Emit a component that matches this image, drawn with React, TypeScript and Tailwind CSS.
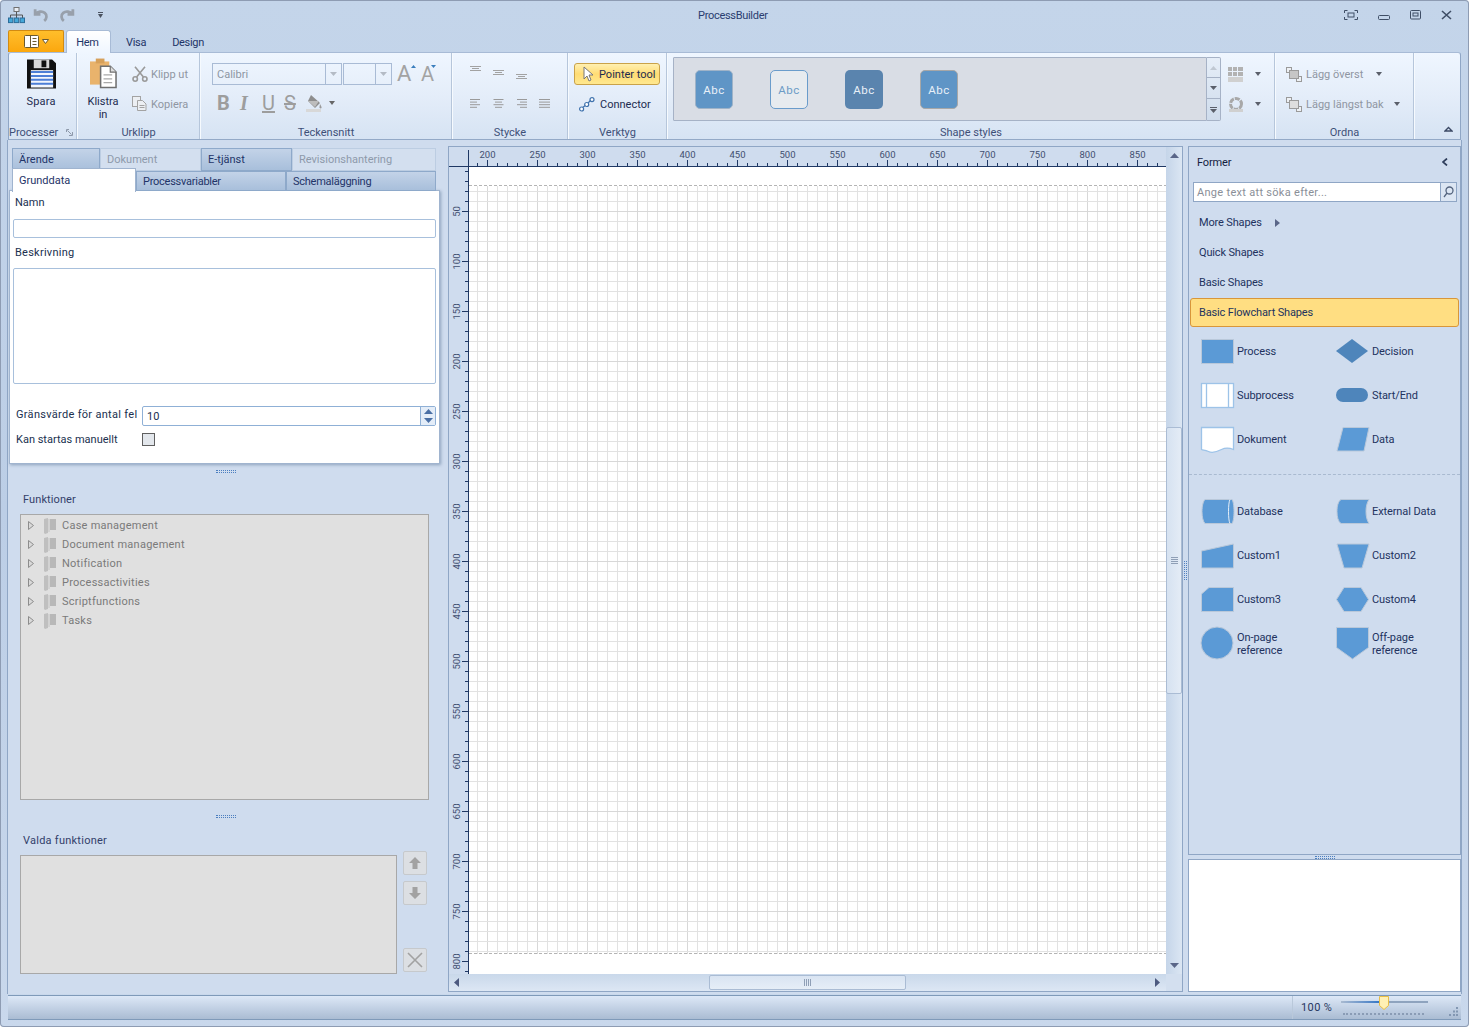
import React from "react";

const Caret = ({ c = "#5a5f6a", w = 6 }: { c?: string; w?: number }) => (
  <svg width={w} height={4} viewBox="0 0 7 4" preserveAspectRatio="none" className="shrink-0"><path d="M0 0h7L3.5 4z" fill={c} /></svg>
);

const Sep = () => (
  <div className="w-[2px] h-[86px] shrink-0 flex"><div className="w-px bg-[#b6c6db]" /><div className="w-px bg-[#f6fafe]" /></div>
);

const Group = ({ w, label, children, className = "" }: { w: string; label: React.ReactNode; children?: React.ReactNode; className?: string }) => (
  <div className={`${w} shrink-0 h-[86px] flex flex-col`}>
    <div className={`h-[71px] ${className}`}>{children}</div>
    <div className="h-[15px] leading-[17px] text-center text-[11px] text-[#3e5078]">{label}</div>
  </div>
);

const SaveIcon = () => (
  <svg width="29" height="32" viewBox="0 0 30 32" className="shrink-0">
    <path d="M0 1h26l4 4v26H0z" fill="#111" />
    <rect x="7" y="1" width="16" height="9" fill="#d8d8d8" />
    <rect x="15" y="2" width="5" height="7" fill="#111" />
    <rect x="4" y="12" width="23" height="18" fill="#f4f7fd" />
    <path d="M4 14h23M4 18h23M4 22h23M4 26h23" stroke="#4d7fd6" strokeWidth="2" />
  </svg>
);

const PasteIcon = () => (
  <svg width="27" height="31" viewBox="0 0 28 31" className="shrink-0">
    <rect x="0" y="3" width="20" height="24" fill="#e9b36c" />
    <rect x="6" y="0" width="9" height="5" fill="#d6a05a" />
    <path d="M11 8h10l6 6v16H11z" fill="#fff" stroke="#6f6f6f" strokeWidth="1.6" />
    <path d="M21 8v6h6" fill="#ddd" stroke="#6f6f6f" strokeWidth="1.2" />
    <path d="M14 17h9M14 21h9M14 25h9" stroke="#a9a9a9" strokeWidth="1.4" />
  </svg>
);

const Scissors = () => (
  <svg width="16" height="16" viewBox="0 0 16 16" fill="none" stroke="#9a9a9a" strokeWidth="1.6" className="shrink-0">
    <circle cx="3.2" cy="13" r="2.2" /><circle cx="12.8" cy="13" r="2.2" />
    <path d="M4.6 11 13 0.8M11.4 11 3 0.8" />
  </svg>
);

const CopyIcon = () => (
  <svg width="15" height="15" viewBox="0 0 15 15" fill="#eceff3" stroke="#a3a3a3" className="shrink-0">
    <rect x="0.5" y="0.5" width="8" height="10" />
    <path d="M5.5 4.5h5l3.5 3.5v6.5H5.5z" />
    <path d="M7.5 9.5h5M7.5 11.5h5" />
  </svg>
);

const AlignIcon = ({ kind }: { kind: "l" | "c" | "r" | "j" }) => {
  const rows = [10, 7, 10, 7];
  return (
    <svg width="11" height="9" viewBox="0 0 11 9" stroke="#9a9a9a">
      {rows.map((len, i) => {
        const l = kind === "j" ? 11 : len;
        const x = kind === "r" ? 11 - l : kind === "c" ? (11 - l) / 2 : 0;
        return <path key={i} d={`M${x} ${i * 2.6 + 0.5}h${l}`} />;
      })}
    </svg>
  );
};

const TopAlign = () => (
  <svg width="11" height="5" viewBox="0 0 11 5" stroke="#a2a2a2"><path d="M0 .5h11M2 2.5h7M0 4.5h11" /></svg>
);

const OrderIcon = ({ front }: { front?: boolean }) => (
  <svg width="16" height="15" viewBox="0 0 16 15" stroke="#9a9a9a" fill="#eef1f5" className="shrink-0">
    <rect x="0.5" y="0.5" width="5" height="5" />
    <rect x="10.5" y="9.5" width="5" height="5" />
    <rect x="3.5" y="3.5" width="9" height="8" fill={front ? "#c6c6c6" : "#dedede"} />
  </svg>
);

const Abc = ({ className }: { className: string }) => (
  <div className={`w-[38px] h-[39px] pt-[3px] rounded-[5px] flex items-center justify-center text-[11.5px] tracking-[0.5px] ${className}`}>Abc</div>
);

const Ribbon = () => (
  <div className="mx-[8px] h-[88px] rounded-t-[3px] border border-b-[#93a9c7] border-x-[#8fa6c5] border-t-[#a8bbd6] bg-gradient-to-b from-[#eff6ff] via-[#e4edf9] to-[#d6e3f3] flex shrink-0">
    <Group
      w="w-[67px]"
      label={
        <div className="flex justify-between items-center pr-[3px] text-[#3e5078]">
          Processer
          <svg width="7" height="7" viewBox="0 0 7 7" fill="none" stroke="#8e99aa"><path d="M.5 3V.5H3M1.5 1.5l4 4M6.5 3v3.5H3" /></svg>
        </div>
      }
      className="pr-[3px]"
    >
      <div className="flex flex-col items-center pt-[5px]">
        <SaveIcon />
        <div className="text-[11px] leading-[16px] tracking-[0.2px] text-[#1d2c50] mt-[4px]">Spara</div>
      </div>
    </Group>
    <Sep />
    <Group w="w-[121px]" label="Urklipp" className="flex">
      <div className="w-[50px] flex flex-col items-center pt-[5px]">
        <PasteIcon />
        <div className="text-[11px] leading-[13px] text-[#1d2c50] text-center mt-[6px]">Klistra<br />in</div>
      </div>
      <div className="flex flex-col text-[11px] text-[#8f96a2] pt-[13px] pl-[4px]">
        <div className="h-[30px] flex items-start gap-[3px]"><Scissors /><span className="leading-[18px] whitespace-nowrap">Klipp ut</span></div>
        <div className="h-[20px] flex items-start gap-[4px]"><CopyIcon /><span className="leading-[18px]">Kopiera</span></div>
      </div>
    </Group>
    <Sep />
    <Group w="w-[250px]" label="Teckensnitt" className="pl-[11px] pt-[10px]">
      <div className="flex items-center">
        <div className="w-[130px] h-[22px] border border-[#a9bbd5] flex">
          <div className="flex-1 pl-[4px] text-[11px] leading-[22px] text-[#8d96a3]">Calibri</div>
          <div className="w-[16px] border-l border-[#a9bbd5] flex items-center justify-center"><Caret c="#b4bbc5" w={7} /></div>
        </div>
        <div className="ml-[1px] w-[49px] h-[22px] border border-[#a9bbd5] flex">
          <div className="flex-1" />
          <div className="w-[16px] border-l border-[#a9bbd5] flex items-center justify-center"><Caret c="#b4bbc5" w={7} /></div>
        </div>
        <div className="relative ml-[5px] w-[19px] text-[22px] leading-[22px] text-[#a3a3a3]">A<svg className="absolute top-[2px] left-[14px]" width="5" height="3" viewBox="0 0 5 3"><path d="M0 3h5L2.500 0z" fill="#3a7ebd" /></svg></div>
        <div className="relative ml-[5px] w-[19px] text-[20px] leading-[22px] text-[#a3a3a3]">A<svg className="absolute top-[2px] left-[10px]" width="5" height="3" viewBox="0 0 5 3"><path d="M0 0h5L2.500 3z" fill="#3a7ebd" /></svg></div>
      </div>
      <div className="flex items-center mt-[7px] pl-[5px] h-[22px] text-[20px] leading-[22px] text-[#9d9d9d]">
        <span className="w-[23px] font-bold">B</span>
        <span className="w-[22px] italic font-['Liberation_Serif',serif] font-bold">I</span>
        <span className="w-[22px] underline">U</span>
        <span className="w-[22px] line-through">S</span>
        <svg width="17" height="18" viewBox="0 0 17 18" className="shrink-0"><path d="M5 1l9 8-5 5-7-7z" fill="#8d8d8d" /><path d="M2 7h11l-4 6z" fill="#bdbdbd" /><path d="M14 10c1 2 2 3 1.500 4s-2.500 0-2-1z" fill="#9a9a9a" /><rect y="15" width="15" height="3" fill="#d8d8d8" /></svg>
        <span className="ml-[6px]"><Caret c="#666" w={6} /></span>
      </div>
    </Group>
    <Sep />
    <Group w="w-[114px]" label="Stycke" className="pl-[17px]">
      <div className="grid grid-cols-[23px_23px_23px] pt-[13px] h-[40px] items-start">
        <TopAlign />
        <div className="mt-[4px]"><TopAlign /></div>
        <div className="mt-[8px]"><TopAlign /></div>
      </div>
      <div className="grid grid-cols-[23px_23px_23px_23px] pt-[6px]">
        <AlignIcon kind="l" /><AlignIcon kind="c" /><AlignIcon kind="r" /><AlignIcon kind="j" />
      </div>
    </Group>
    <Sep />
    <Group w="w-[97px]" label="Verktyg" className="pl-[5px] pt-[10px]">
      <div className="w-[86px] h-[22px] rounded-[3px] border border-[#c9a24a] bg-gradient-to-b from-[#fff0b0] via-[#ffdc74] to-[#ffe88f] flex items-center text-[11px] text-[#1d2c50]">
        <svg className="ml-[8px] mr-[5px] shrink-0" width="11" height="16" viewBox="0 0 11 16"><path d="M1 1v12l3-3 2 5 2-1-2-5h4z" fill="#fff" stroke="#777" /></svg>
        <span className="whitespace-nowrap pt-[2px]">Pointer tool</span>
      </div>
      <div className="flex items-center mt-[8px] h-[22px] text-[11px] text-[#1d2c50]">
        <svg className="ml-[5px] mr-[5px] shrink-0" width="16" height="15" viewBox="0 0 16 15" fill="#fff" stroke="#3f72ad" strokeWidth="1.2"><path d="M3 11l4-3M9 6l3-3" /><circle cx="2.600" cy="12" r="2" /><circle cx="7.700" cy="7.500" r="2" /><circle cx="13" cy="2.600" r="2" /></svg>
        <span className="pt-[2px]">Connector</span>
      </div>
    </Group>
    <Sep />
    <Group w="w-[606px]" label="Shape styles" className="flex pl-[5px] pt-[4px]">
      <div className="w-[534px] h-[64px] border border-[#a6b2c6] bg-[#d9dde5] rounded-l-[1px] flex items-center pl-[21px] gap-[37px]">
        <Abc className="bg-[#5f95c6] border border-[#9fb3c8] text-[#e8f0f8]" />
        <Abc className="bg-[#e7ebef] border border-[#6a9ccb] text-[#6c9bc6]" />
        <Abc className="bg-[#5a84ae] text-[#e8f0f8]" />
        <Abc className="bg-[#5f95c6] border border-[#a7a7a7] text-[#e8f0f8]" />
      </div>
      <div className="w-[14px] h-[64px] border border-l-0 border-[#a6b2c6] rounded-r-[2px] flex flex-col bg-gradient-to-b from-[#e6eef8] to-[#cfdcec]">
        <div className="h-[20px] border-b border-[#a6b2c6] flex items-center justify-center"><svg width="7" height="4" viewBox="0 0 7 4"><path d="M0 4h7L3.500 0z" fill="#c0c8d2" /></svg></div>
        <div className="h-[21px] border-b border-[#a6b2c6] flex items-center justify-center"><Caret c="#5a5f6a" w={7} /></div>
        <div className="flex-1 flex flex-col items-center justify-center gap-[1px]"><div className="w-[7px] h-px bg-[#5a5f6a]" /><Caret c="#5a5f6a" w={7} /></div>
      </div>
      <div className="pl-[7px] pt-[9px]">
        <div className="flex items-center h-[16px]">
          <svg width="15" height="15" viewBox="0 0 15 15" fill="#b2b2b2" className="shrink-0"><path d="M0 0h4v4H0zM5 0h4v4H5zM10 0h5v4h-5zM0 5h4v4H0zM5 5h4v4H5zM10 5h5v4h-5z" /><path d="M0 10h15v5H0z" fill="#d0d0d0" /></svg>
          <span className="ml-[12px]"><Caret /></span>
        </div>
        <div className="flex items-center h-[16px] mt-[14px]">
          <svg width="16" height="15" viewBox="0 0 16 15" fill="none" className="shrink-0"><circle cx="8" cy="7" r="5.500" stroke="#a8a8a8" strokeWidth="3" strokeDasharray="5 1" /><path d="M1 12h14v3H1z" fill="#d0d0d0" /></svg>
          <span className="ml-[11px]"><Caret /></span>
        </div>
      </div>
    </Group>
    <Sep />
    <Group w="w-[137px]" label="Ordna" className="pl-[10px] pt-[13px] text-[11px] text-[#8f96a2]">
      <div className="flex items-center h-[16px]">
        <OrderIcon front /><span className="ml-[4px] w-[70px] pt-[2px] whitespace-nowrap">Lägg överst</span><Caret />
      </div>
      <div className="flex items-center h-[16px] mt-[14px]">
        <OrderIcon /><span className="ml-[4px] w-[88px] pt-[2px] whitespace-nowrap">Lägg längst bak</span><Caret />
      </div>
    </Group>
    <Sep />
    <div className="flex-1 flex items-end justify-end pb-[7px] pr-[7px]">
      <svg width="9" height="6" viewBox="0 0 9 6" fill="none" stroke="#3c4a66" strokeWidth="1.400"><path d="M1 5l3.500-3.500L8 5z" /></svg>
    </div>
  </div>
);

const TitleBar = () => (
  <div className="h-[30px] flex items-center relative shrink-0">
    <div className="flex items-center pl-[8px]">
      <svg width="17" height="17" viewBox="0 0 17 17" className="shrink-0"><rect x="6" y="0.500" width="5" height="4" fill="#e9edf3" stroke="#707070" /><path d="M8.500 5v3M2.500 11V8h12v3M8.500 8v3" fill="none" stroke="#555" /><g fill="#45a7d8" stroke="#2c6d9a"><rect x="0.500" y="11" width="4.400" height="4.600" /><rect x="6.300" y="11" width="4.400" height="4.600" /><rect x="12.100" y="11" width="4.400" height="4.600" /></g></svg>
      <svg className="ml-[8px] shrink-0" width="16" height="16" viewBox="0 0 15 15" fill="none" stroke="#98a0ab" strokeWidth="2.600"><path d="M2 2v5h5M2.500 7c2-3 6-3.500 8.500-1.500s2 5.500-.5 7.500" /></svg>
      <svg className="ml-[10px] shrink-0" width="16" height="16" viewBox="0 0 15 15" fill="none" stroke="#98a0ab" strokeWidth="2.600"><path d="M13 2v5H8M12.500 7c-2-3-6-3.500-8.500-1.500s-2 5.500.5 7.500" /></svg>
      <div className="ml-[23px] flex flex-col items-center gap-[1px]"><div className="w-[5px] h-px bg-[#4a5260]" /><Caret c="#4a5260" w={5} /></div>
    </div>
    <div className="absolute left-[698px] top-[9px] text-[11px] leading-[14px] tracking-[-0.3px] text-[#2a3d70]">ProcessBuilder</div>
    <div className="ml-auto pr-[17px] flex items-center text-[#46566e]">
      <svg width="14" height="10" viewBox="0 0 14 10" fill="none" stroke="#3f4e66" className="shrink-0"><path d="M3.500.5H.5V3M10.500.5h3V3M.5 7v2.500h3M13.500 7v2.500h-3" /><rect x="4" y="3" width="6" height="4" /></svg>
      <svg className="ml-[20px] mt-[4px] shrink-0" width="12" height="5" viewBox="0 0 12 5" fill="none" stroke="#3f4e66"><rect x="0.500" y="0.500" width="11" height="4" rx="1" /></svg>
      <svg className="ml-[20px] shrink-0" width="11" height="10" viewBox="0 0 11 10" fill="none" stroke="#3f4e66"><rect x="0.500" y="0.500" width="10" height="8.500" rx="1" /><rect x="3" y="3" width="5" height="3" /></svg>
      <svg className="ml-[20px] shrink-0" width="11" height="10" viewBox="0 0 11 10" fill="none" stroke="#3f4e66" strokeWidth="1.600"><path d="M1 1l9 8M10 1L1 9" /></svg>
    </div>
  </div>
);

const TabRow = () => (
  <div className="h-[22px] flex items-end pl-[8px] text-[11px] tracking-[-0.3px] text-[#1f3468] shrink-0 relative z-10">
    <div className="w-[56px] h-[22px] rounded-t-[2px] border border-b-0 border-[#d18a12] bg-gradient-to-b from-[#ffbe2a] to-[#fba70c] flex items-center justify-center gap-[3px]">
      <svg width="15" height="13" viewBox="0 0 15 13" fill="#fff" stroke="#6a5a30"><rect x="0.500" y="0.500" width="14" height="12" rx="1" /><path d="M6.500.5v12M8.500 3.500h4M8.500 6.500h4M8.500 9.500h4" fill="none" /></svg>
      <svg width="7" height="5" viewBox="0 0 7 5" fill="#fff" stroke="#6a5a30"><path d="M.5.5h6L3.500 4.500z" /></svg>
    </div>
    <div className="ml-[2px] w-[45px] h-[23px] pt-[2px] pr-[2px] -mb-px rounded-t-[3px] border border-b-0 border-[#a8bbd6] bg-gradient-to-b from-[#ffffff] to-[#eff6ff] flex items-center justify-center">Hem</div>
    <div className="ml-[15px] h-[22px] leading-[26px] -ml-px">Visa</div>
    <div className="ml-[26px] h-[22px] leading-[26px]">Design</div>
  </div>
);

const SubTab = ({ w, label, on, low }: { w: string; label: string; on: boolean; low?: boolean }) => (
  <div className={`${w} shrink-0 h-full pl-[6px] border text-[11px] ${low ? "leading-[22px]" : "leading-[20px] tracking-[-0.25px]"} ${on ? "bg-gradient-to-b from-[#c3d3e8] to-[#a8bfdb] border-[#8ea9ca] text-[#1f3468]" : "bg-[#d3dfef] border-[#bccde2] text-[#8e9aab]"}`}>{label}</div>
);

const Splitter = ({ v }: { v?: boolean }) => (
  v ? <div className="w-[3px] h-[19px] border-x border-dotted border-[#4c7fc0]" />
    : <div className="w-[20px] h-[3px] border-y border-dotted border-[#4c7fc0]" />
);

const Folder = () => (
  <svg width="12" height="16" viewBox="0 0 12 16" className="shrink-0"><path d="M0 1l4-1v15l-3 1-1-1z" fill="#bfbfbf" /><path d="M4 1h8v11H4z" fill="#b8b8b8" /><path d="M4 1h2v13H4z" fill="#d2d2d2" /></svg>
);

const NavBtn = ({ children, className = "" }: { children: React.ReactNode; className?: string }) => (
  <div className={`w-[24px] h-[24px] rounded-[2px] border border-[#c6c9cc] bg-[#dcdfe3] flex items-center justify-center ${className}`}>{children}</div>
);

const LeftPanel = () => (
  <div className="w-[440px] shrink-0 pt-[8px] flex flex-col">
    <div className="pl-[4px] flex h-[23px] pr-[4px]">
      <SubTab w="w-[88px]" label="Ärende" on low />
      <SubTab w="w-[101px]" label="Dokument" on={false} low />
      <SubTab w="w-[91px]" label="E-tjänst" on low />
      <SubTab w="w-[144px]" label="Revisionshantering" on={false} low />
    </div>
    <div className="pl-[4px] flex h-[20px] relative z-10">
      <div className="w-[124px] h-[24px] -mt-[3px] bg-white border border-b-0 border-[#a0b4cf] pl-[6px] text-[11px] leading-[24px] text-[#1f3468]">Grunddata</div>
      <SubTab w="w-[150px]" label="Processvariabler" on />
      <SubTab w="w-[150px]" label="Schemaläggning" on />
    </div>
    <div className="ml-[1px] w-[431px] h-[274px] -mt-px bg-white border border-[#a0b4cf] shadow-[1px_1px_3px_#8fa3bd] px-[3px] text-[11px] text-[#20304f]">
      <div className="leading-[16px] pl-[2px] pt-[4px] h-[28px]">Namn</div>
      <div className="h-[19px] w-[423px] border border-[#a8c0dc] rounded-[2px]" />
      <div className="pl-[2px] mt-[6px] h-[24px] leading-[18px] tracking-[0.25px]">Beskrivning</div>
      <div className="h-[116px] w-[423px] border border-[#a8c0dc] rounded-[2px]" />
      <div className="flex items-center mt-[22px] h-[20px]">
        <div className="w-[129px] pl-[3px] pb-[1px] whitespace-nowrap tracking-[0.3px]">Gränsvärde för antal fel</div>
        <div className="w-[294px] h-[20px] border border-[#8fb0d6] rounded-[2px] flex">
          <div className="flex-1 pl-[4px] pt-[1px] text-[#20304f] leading-[18px]">10</div>
          <div className="w-[15px] border-l border-[#8fb0d6] flex flex-col items-center justify-around bg-[#e4edf8]">
            <svg width="9" height="5" viewBox="0 0 9 5"><path d="M0 5h9L4.500 0z" fill="#4a6fa5" /></svg>
            <svg width="9" height="5" viewBox="0 0 9 5"><path d="M0 0h9L4.500 5z" fill="#4a6fa5" /></svg>
          </div>
        </div>
      </div>
      <div className="flex items-center mt-[5px] h-[16px]">
        <div className="w-[129px] pl-[3px] pt-[2px]">Kan startas manuellt</div>
        <div className="w-[13px] h-[13px] border border-[#5f5f5f] bg-[#e3e7ec]" />
      </div>
    </div>
    <div className="h-[13px] flex items-center justify-center pr-[4px] pt-[1px]"><Splitter /></div>
    <div className="pl-[12px] flex flex-col text-[11px]">
      <div className="mt-[15px] h-[15px] leading-[15px] text-[#33406a] pl-[3px] tracking-[0.1px]">Funktioner</div>
      <div className="mt-[7px] w-[409px] h-[286px] bg-[#e0e0e0] border border-[#a8a8a8] pt-[1px] text-[#7a7a7a] tracking-[0.25px]">
        {["Case management", "Document management", "Notification", "Processactivities", "Scriptfunctions", "Tasks"].map((t) => (
          <div key={t} className="h-[19px] flex items-center pl-[7px]">
            <svg width="6" height="9" viewBox="0 0 6 9" className="shrink-0"><path d="M.5.5l5 4-5 4z" fill="#d9d9d9" stroke="#8c8c8c" /></svg>
            <span className="ml-[10px]"><Folder /></span>
            <span className="ml-[6px] leading-[19px]">{t}</span>
          </div>
        ))}
      </div>
      <div className="h-[33px] flex items-center justify-center pl-[3px] w-[409px]"><Splitter /></div>
      <div className="h-[15px] leading-[15px] text-[#33406a] pl-[3px] tracking-[0.25px]">Valda funktioner</div>
      <div className="flex mt-[3px]">
        <div className="w-[377px] h-[119px] mt-[4px] bg-[#e0e0e0] border border-[#a8a8a8]" />
        <div className="ml-[6px] flex flex-col">
          <NavBtn><svg width="14" height="14" viewBox="0 0 14 14"><path d="M7 1l6 6H9.500v6h-5V7H1z" fill="#a2a2a2" /></svg></NavBtn>
          <NavBtn className="mt-[6px]"><svg width="14" height="14" viewBox="0 0 14 14"><path d="M7 13L1 7h3.500V1h5v6H13z" fill="#a2a2a2" /></svg></NavBtn>
          <NavBtn className="mt-[43px]"><svg width="16" height="16" viewBox="0 0 16 16" stroke="#a2a2a2" strokeWidth="1.600"><path d="M1 1l14 14M15 1L1 15" /></svg></NavBtn>
        </div>
      </div>
    </div>
  </div>
);

const CanvasDrawing = () => {
  const xs: number[] = [];
  for (let v = 190; v <= 870; v += 10) xs.push(v);
  const ys: number[] = [];
  for (let v = 10; v <= 810; v += 10) ys.push(v);
  const X = (v: number) => v - 162 + 0.5;
  const Y = (v: number) => v + 14 + 0.5;
  return (
    <svg width="717" height="827" viewBox="0 0 717 827" shapeRendering="crispEdges" className="block shrink-0">
      <rect width="717" height="827" fill="#cfdcee" />
      <rect x="20" y="20" width="697" height="807" fill="#fff" />
      {xs.filter((v) => X(v) > 20).map((v) => (
        <path key={v} d={`M${X(v)} 38.500V806.500`} stroke={v % 50 === 0 ? "#d8d8d8" : "#e2e2e2"} />
      ))}
      {ys.filter((v) => v >= 30 && v <= 790).map((v) => (
        <path key={v} d={`M20 ${Y(v)}H717`} stroke={v % 50 === 0 ? "#d8d8d8" : "#e2e2e2"} />
      ))}
      <path d="M20 38.500H717M20 806.500H717" stroke="#b4b4b4" strokeDasharray="3 2" />
      <path d="M0 19.500H717M19.500 3V827" stroke="#1f3864" />
      {xs.filter((v) => X(v) > 20 && X(v) < 717).map((v) => (
        <path key={v} d={`M${X(v)} ${v % 50 === 0 ? 13 : 16}V19`} stroke="#1f3864" />
      ))}
      {ys.filter((v) => Y(v) > 20).map((v) => (
        <path key={v} d={`M${v % 50 === 0 ? 13 : 16} ${Y(v)}H19`} stroke="#1f3864" />
      ))}
      <g fontSize="9.500" fill="#3f4f70" shapeRendering="auto" textAnchor="middle">
        {xs.filter((v) => v % 50 === 0 && v >= 200 && v <= 850).map((v) => (
          <text key={v} x={X(v)} y="11">{v}</text>
        ))}
        {ys.filter((v) => v % 50 === 0).map((v) => (
          <text key={v} transform={`translate(11 ${Y(v)}) rotate(-90)`}>{v}</text>
        ))}
      </g>
    </svg>
  );
};

const CanvasBox = () => (
  <div className="w-[735px] shrink-0 mt-[6px] h-[846px] border border-[#8fa6c5] flex flex-col">
    <div className="flex h-[827px]">
      <CanvasDrawing />
      <div className="flex-1 bg-gradient-to-r from-[#c5d5e9] to-[#dbe6f3] flex flex-col items-center">
        <div className="h-[20px] pt-[6px]"><svg width="9" height="5" viewBox="0 0 9 5"><path d="M0 5h9L4.500 0z" fill="#5a6688" /></svg></div>
        <div className="h-[260px]" />
        <div className="w-full h-[267px] border border-[#aabcd4] rounded-[2px] bg-gradient-to-r from-[#d6e2f1] to-[#e4ecf6] flex flex-col items-center justify-center gap-[1px]">
          <div className="w-[7px] h-px bg-[#8f9fb6]" /><div className="w-[7px] h-px bg-[#8f9fb6]" /><div className="w-[7px] h-px bg-[#8f9fb6]" /><div className="w-[7px] h-px bg-[#8f9fb6]" />
        </div>
        <div className="flex-1 flex items-end pb-[6px]"><svg width="9" height="5" viewBox="0 0 9 5"><path d="M0 0h9L4.500 5z" fill="#5a6688" /></svg></div>
      </div>
    </div>
    <div className="flex-1 flex">
      <div className="w-[717px] bg-gradient-to-b from-[#c9d8ea] to-[#dde7f4] flex items-center">
        <svg className="ml-[5px] shrink-0" width="5" height="9" viewBox="0 0 5 9"><path d="M5 0v9L0 4.500z" fill="#4d5a80" /></svg>
        <div className="ml-[250px] w-[197px] h-[15px] border border-[#aabcd4] rounded-[2px] bg-gradient-to-b from-[#d9e4f2] to-[#e6eef7] flex items-center justify-center gap-[1px]">
          <div className="w-px h-[7px] bg-[#8f9fb6]" /><div className="w-px h-[7px] bg-[#8f9fb6]" /><div className="w-px h-[7px] bg-[#8f9fb6]" /><div className="w-px h-[7px] bg-[#8f9fb6]" />
        </div>
        <svg className="ml-auto mr-[6px] shrink-0" width="5" height="9" viewBox="0 0 5 9"><path d="M0 0v9l5-4.500z" fill="#4d5a80" /></svg>
      </div>
      <div className="flex-1 bg-[#d3dfef]" />
    </div>
  </div>
);

const SHAPE = "#5b9ad6";
const EDGE = "#b9c8da";
const shapes: Record<string, React.ReactNode> = {
  Process: <rect x="2.500" y="6.500" width="32" height="24" fill={SHAPE} stroke={EDGE} />,
  Decision: <path d="M18 6l16 12-16 12L2 18z" fill="#4e85bb" />,
  Subprocess: <g fill="#fff" stroke="#9dc3e8" strokeWidth="1.300"><rect x="2.500" y="6.500" width="32" height="24" /><path d="M7.500 6.500v24M29.500 6.500v24" /></g>,
  "Start/End": <rect x="2" y="11" width="32" height="14" rx="7" fill="#4e85bb" />,
  Dokument: <path d="M2.500 6.500h32v22c-5-2-8-2-12 0s-9 4-13 2-5-1-7-2z" fill="#fff" stroke="#9dc3e8" strokeWidth="1.300" />,
  Data: <path d="M9 6.500h26L30 30H3z" fill={SHAPE} stroke={EDGE} />,
  Database: <g stroke={EDGE}><path d="M6 6.500h27c1 1 2 6 2 12s-1 11-2 12H6c-2-2-3-7-3-12s1-10 3-12z" fill={SHAPE} /><path d="M31 6.500c-2 3-2 21 0 24" fill="none" stroke="#e5eef8" /></g>,
  "External Data": <path d="M7 6.500h28c-2 3-3 7-3 12s1 9 3 12H7c-3-2-4-7-4-12s1-10 4-12z" fill={SHAPE} stroke={EDGE} />,
  Custom1: <path d="M2.500 14l32-7v24h-32z" fill={SHAPE} stroke={EDGE} />,
  Custom2: <path d="M3 7h32l-7 24H10z" fill={SHAPE} stroke={EDGE} />,
  Custom3: <path d="M10 6.500h24.500v24h-32V13z" fill={SHAPE} stroke={EDGE} />,
  Custom4: <path d="M10 6.500h17L34.500 18.500 27 30.500H10L2.500 18.500z" fill={SHAPE} stroke={EDGE} />,
  "On-page": <circle cx="18" cy="18" r="16" fill={SHAPE} stroke={EDGE} />,
  "Off-page": <path d="M2.500 2.500h32v20L18.500 34 2.500 22.500z" fill={SHAPE} stroke={EDGE} />,
};

const ShapeItem = ({ k, children }: { k: string; children?: React.ReactNode }) => (
  <div className="flex items-center h-[44px]">
    <svg width="36" height="36" viewBox="0 0 36 36" className="shrink-0">{shapes[k]}</svg>
    <span className="ml-[2px] text-[11px] leading-[13px] tracking-[-0.1px] text-[#22325e] whitespace-nowrap">{children ?? k}</span>
  </div>
);

const RightPanel = () => (
  <div className="w-[273px] shrink-0 mt-[6px] flex flex-col h-[846px]">
    <div className="h-[709px] border border-[#8fa6c5] text-[11px] tracking-[-0.15px] text-[#22325e] flex flex-col">
      <div className="h-[23px] flex items-end justify-between pl-[8px] pr-[12px] text-[#14213f]">
        <span className="leading-[14px]">Former</span>
        <svg className="mb-[4px] shrink-0" width="6" height="8" viewBox="0 0 6 8" fill="none" stroke="#2f3e5c" strokeWidth="1.700"><path d="M5 .5L1 4l4 3.500" /></svg>
      </div>
      <div className="ml-[4px] mt-[12px] w-[264px] h-[20px] border border-[#8fa6c5] bg-white flex">
        <div className="flex-1 pl-[3px] text-[#8a8f98] leading-[20px] tracking-[0.3px]">Ange text att söka efter...</div>
        <div className="w-[16px] border-l border-[#8fa6c5] bg-[#dce6f3] flex items-center justify-center">
          <svg width="11" height="12" viewBox="0 0 11 12" fill="none" stroke="#55657f" strokeWidth="1.300"><circle cx="6.500" cy="4.500" r="3.500" /><path d="M4 7l-3 4" /></svg>
        </div>
      </div>
      <div className="pl-[10px] pt-[2px] mt-[5px] h-[30px] flex items-center">More Shapes<svg className="ml-[13px] shrink-0" width="5" height="8" viewBox="0 0 5 8"><path d="M0 0v8l5-4z" fill="#5a6688" /></svg></div>
      <div className="pl-[10px] pt-[2px] h-[30px] flex items-center">Quick Shapes</div>
      <div className="pl-[10px] pt-[2px] h-[30px] flex items-center">Basic Shapes</div>
      <div className="ml-[1px] mt-[1px] w-[269px] h-[29px] rounded-[3px] border border-[#d8963a] bg-[#ffde82] pl-[8px] pt-[1px] flex items-center">Basic Flowchart Shapes</div>
      <div className="mt-[2px] pl-[10px] grid grid-cols-[135px_1fr]">
        <ShapeItem k="Process" /><ShapeItem k="Decision" />
        <ShapeItem k="Subprocess" /><ShapeItem k="Start/End" />
        <ShapeItem k="Dokument" /><ShapeItem k="Data" />
      </div>
      <div className="mt-[13px] border-t border-dashed border-[#a9bad0]" />
      <div className="mt-[14px] pl-[10px] grid grid-cols-[135px_1fr]">
        <ShapeItem k="Database" /><ShapeItem k="External Data" />
        <ShapeItem k="Custom1" /><ShapeItem k="Custom2" />
        <ShapeItem k="Custom3" /><ShapeItem k="Custom4" />
        <ShapeItem k="On-page"><span className="block pt-[2px]">On-page<br />reference</span></ShapeItem>
        <ShapeItem k="Off-page"><span className="block pt-[2px]">Off-page<br />reference</span></ShapeItem>
      </div>
    </div>
    <div className="h-[4px] flex items-center justify-center"><Splitter /></div>
    <div className="flex-1 border border-[#8fa6c5] bg-white" />
  </div>
);

const StatusBar = () => (
  <div className="mx-[8px] mt-px h-[25px] border-y border-[#7f9ab9] bg-gradient-to-b from-[#dde8f7] to-[#aabcd3] flex items-center shrink-0 relative">
    <div className="ml-auto h-full w-[1px] bg-[#b9c8da] mr-[8px]" />
    <div className="text-[11px] pt-[2px] tracking-[0.4px] text-[#26365f] w-[40px]">100 %</div>
    <div className="w-[87px] flex flex-col mr-[33px]">
      <div className="h-[2px] mt-[1px] flex relative">
        <div className="w-[40px] h-full bg-gradient-to-r from-[#a9bad0] to-[#2f74c4]" />
        <div className="flex-1 h-full bg-[#8ea3be]" />
        <svg className="absolute left-[38px] -top-[5px]" width="10" height="14" viewBox="0 0 10 14"><path d="M.5.5h9v9L5 13.500.5 9.500z" fill="#fff0b4" stroke="#e8bd45" /></svg>
      </div>
      <div className="mt-[10px] ml-[2px] w-[81px] border-t-2 border-dotted border-[#8a9cb5]" />
    </div>
    <svg className="absolute right-[2px] bottom-[2px]" width="10" height="10" viewBox="0 0 10 10" fill="#8297b2"><path d="M7 0h2v2H7zM4 3.500h2v2H4zM7 3.500h2v2H7zM0 7h2v2H0zM4 7h2v2H4zM7 7h2v2H7z" /></svg>
  </div>
);

export default function App() {
  return (
    <div className="w-[1469px] h-[1027px] overflow-hidden bg-gradient-to-b from-[#c4d5ea] via-[#bccee6] to-[#c9d8ec] flex flex-col font-['Roboto',sans-serif] shadow-[inset_0_0_0_1px_#8e9cb3] rounded-[4px]">
      <TitleBar />
      <TabRow />
      <Ribbon />
      <div className="mx-[8px] h-[854px] bg-[#cfdcee] flex shrink-0 shadow-[-1px_0_0_#8fa6c5,1px_0_0_#8fa6c5]">
        <LeftPanel />
        <CanvasBox />
        <div className="w-[5px] shrink-0 flex items-center justify-center mt-[6px]"><Splitter v /></div>
        <RightPanel />
      </div>
      <StatusBar />
    </div>
  );
}
